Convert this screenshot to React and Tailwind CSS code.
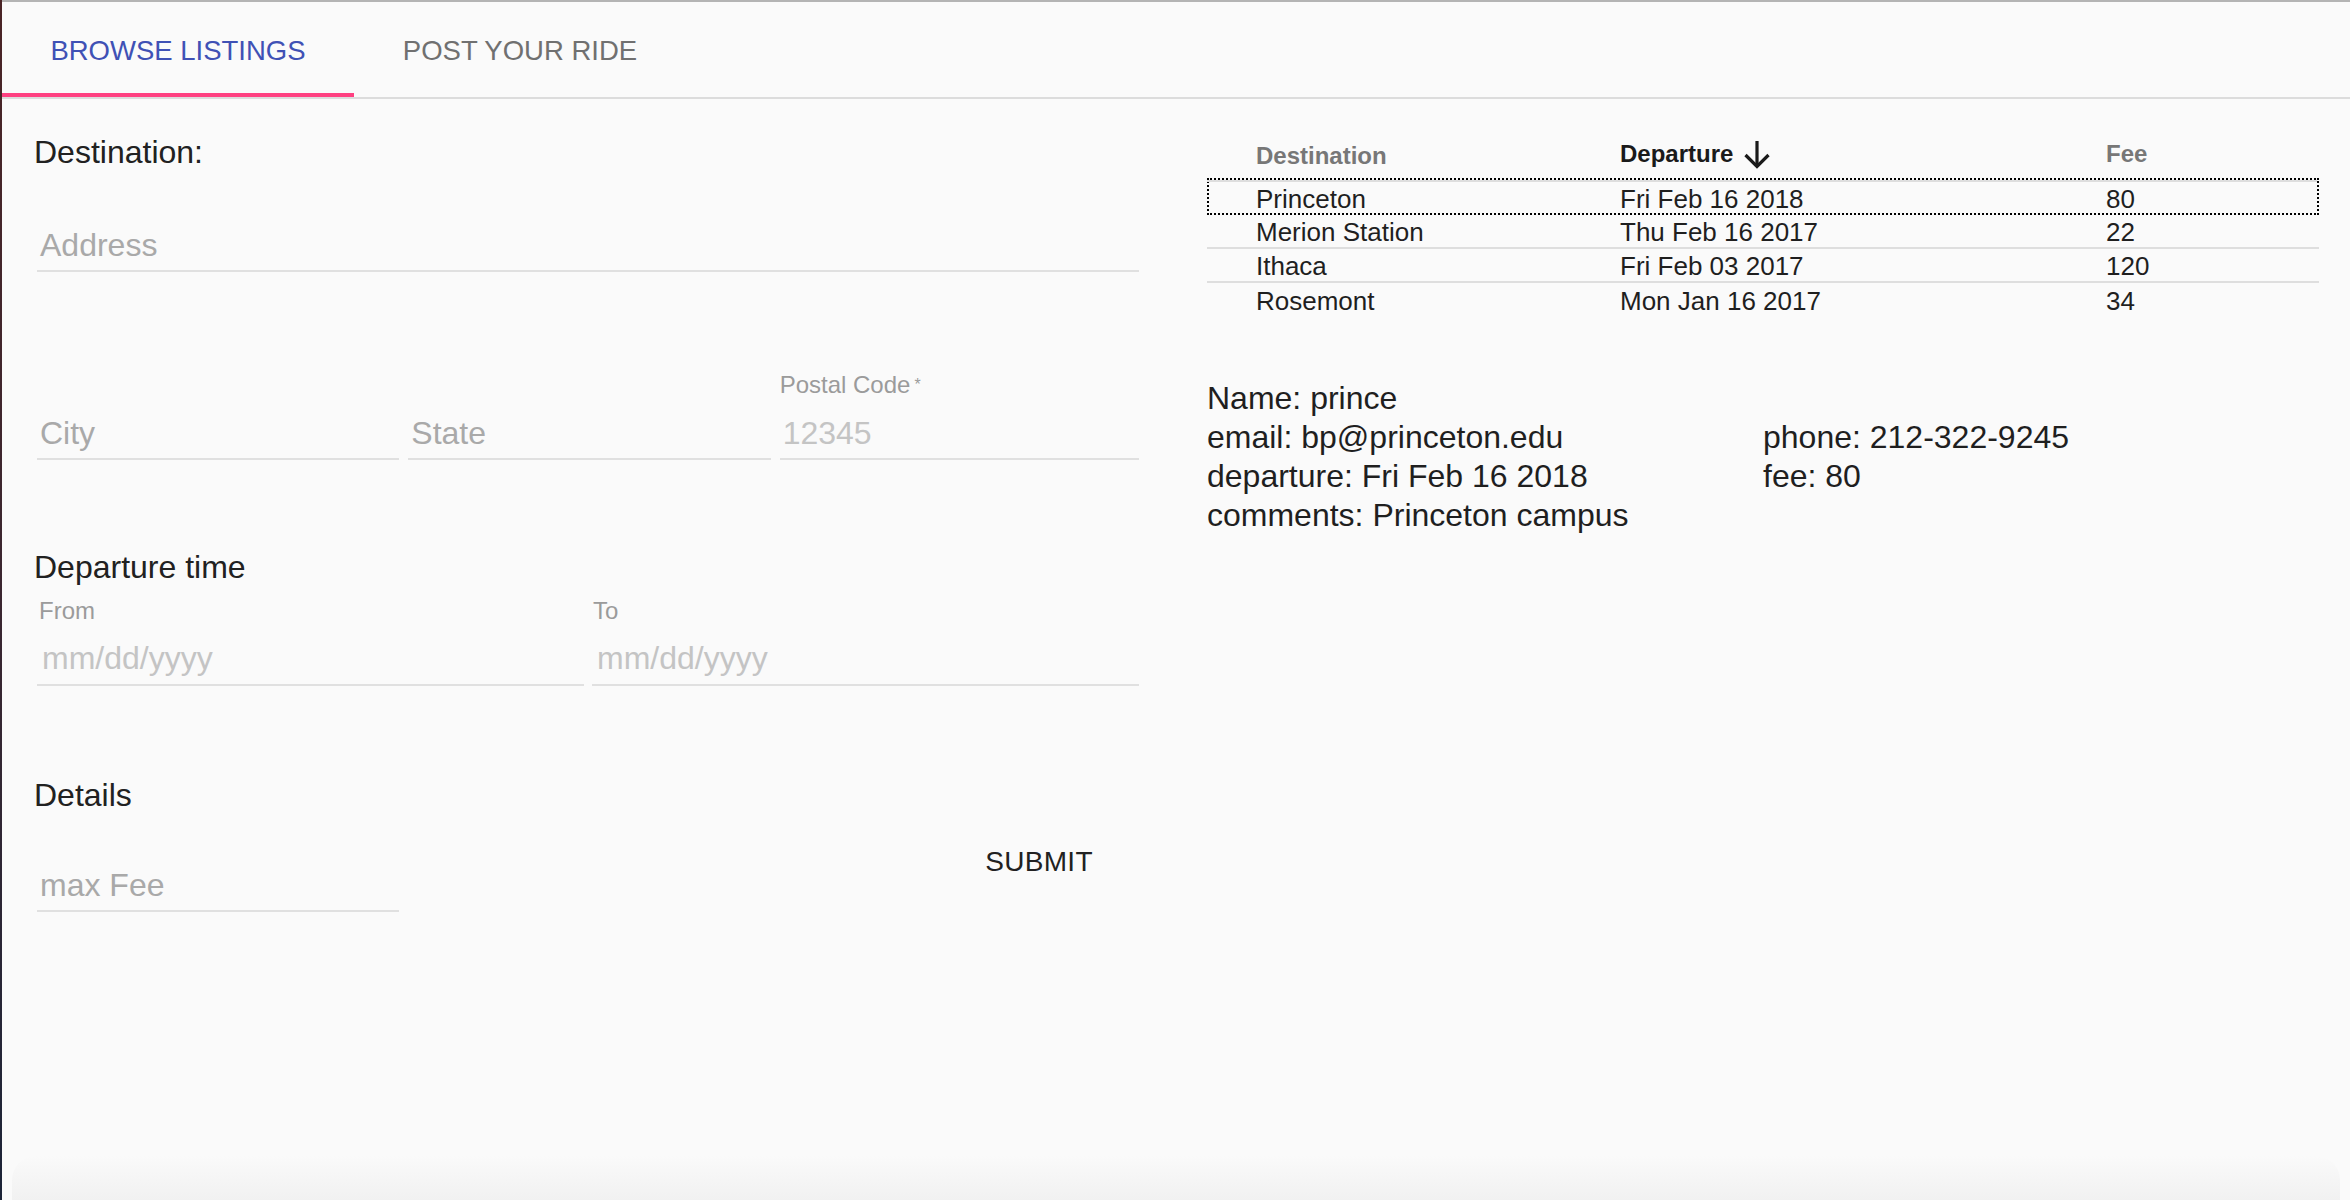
import React from "react";

const FONT = { fontFamily: '"Liberation Sans", Arial, Helvetica, sans-serif' };

function Field({ placeholder, light, className = "" }) {
  return (
    <div className={`border-b-2 border-[#e0e0e0] pl-[3px] text-[32px] leading-[37px] ${light ? "text-[#c4c4c4]" : "text-[#a9a9a9]"} ${className}`}>
      {placeholder}
    </div>
  );
}

function ArrowDownIcon() {
  return (
    <svg width="32" height="32" viewBox="0 0 32 32" fill="none" stroke="#1a1a1a" strokeWidth="3.2" strokeLinecap="butt" strokeLinejoin="miter">
      <line x1="16" y1="3" x2="16" y2="28" />
      <polyline points="4.5,17 16,28.5 27.5,17" />
    </svg>
  );
}

const rows = [
  ["Princeton", "Fri Feb 16 2018", "80"],
  ["Merion Station", "Thu Feb 16 2017", "22"],
  ["Ithaca", "Fri Feb 03 2017", "120"],
  ["Rosemont", "Mon Jan 16 2017", "34"],
];

export default function App() {
  return (
    <div className="w-[2350px] h-[1200px] flex bg-[#fafafa] overflow-hidden" style={FONT}>
      <div className="w-[2px] h-full bg-gradient-to-b from-[#4a2426] via-[#3a2630] to-[#1c2438]" />
      <div className="flex-1 flex flex-col border-t-2 border-[#b4b4b4]">
        {/* Tabs */}
        <div className="flex h-[97px] border-b-2 border-[#dcdcdc]">
          <div className="relative w-[352px] flex items-center justify-center text-[27.5px] text-[#3f51b5] pt-[3px]">
            BROWSE LISTINGS
            <div className="absolute left-0 right-0 bottom-0 h-[4px] bg-[#ff4081]" />
          </div>
          <div className="w-[332px] flex items-center justify-center text-[27.5px] text-[#707070] pt-[3px]">
            POST YOUR RIDE
          </div>
        </div>

        {/* Content */}
        <div className="flex">
          {/* Left form */}
          <div className="w-[1173px] pl-[32px] pr-[33px] flex flex-col">
            <div className="mt-[35px] text-[32px] leading-[37px] text-[#212121]">Destination:</div>
            <Field placeholder="Address" className="mt-[56px] mx-[3px] pb-[6px]" />

            <div className="mt-[99px] mx-[3px] flex items-end gap-[9px]">
              <Field placeholder="City" className="flex-1 pb-[6px]" />
              <Field placeholder="State" className="flex-1 pb-[6px]" />
              <div className="flex-1 flex flex-col">
                <div className="text-[24px] leading-[28px] text-[#9b9b9b] mb-[16px]">
                  Postal Code<span className="text-[16px] align-top ml-[4px]">*</span>
                </div>
                <Field placeholder="12345" light className="pb-[6px]" />
              </div>
            </div>

            <div className="mt-[89px] text-[32px] leading-[37px] text-[#212121]">Departure time</div>
            <div className="mt-[11px] mx-[3px] flex gap-[8px]">
              <div className="flex-1 flex flex-col">
                <div className="pl-[2px] text-[24px] leading-[28px] text-[#9b9b9b] mb-[15px]">From</div>
                <Field placeholder="mm/dd/yyyy" light className="pl-[5px] pb-[7px]" />
              </div>
              <div className="flex-1 flex flex-col">
                <div className="pl-[1px] text-[24px] leading-[28px] text-[#9b9b9b] mb-[15px]">To</div>
                <Field placeholder="mm/dd/yyyy" light className="pl-[5px] pb-[7px]" />
              </div>
            </div>

            <div className="mt-[91px] text-[32px] leading-[37px] text-[#212121]">Details</div>
            <div className="mt-[12px] mx-[3px] flex items-start justify-between">
              <Field placeholder="max Fee" className="w-[362px] mt-[41px] pb-[6px]" />
              <button className="w-[176px] h-[72px] mr-[12px] flex items-center justify-center text-[28px] font-medium text-[#212121] tracking-[0.3px]">
                SUBMIT
              </button>
            </div>
          </div>

          {/* Right panel */}
          <div className="flex-1 pl-[32px] pr-[31px] flex flex-col">
            <div className="grid grid-cols-[413px_486px_1fr] h-[79px] items-end pb-[8px] text-[24px] font-bold">
              <div className="pl-[49px] leading-[28px] text-[#777777]">Destination</div>
              <div className="flex items-center text-[#1a1a1a]">
                <span className="leading-[28px]">Departure</span>
                <span className="ml-[8px]"><ArrowDownIcon /></span>
              </div>
              <div className="leading-[28px] text-[#777777] mb-[2px]">Fee</div>
            </div>

            <div className="text-[26px] leading-[28px] text-[#1f1f1f]">
              {rows.map((r, i) => {
                const base = "grid grid-cols-[413px_486px_1fr] items-center";
                if (i === 0) {
                  return (
                    <div key={i} className="border-2 border-dotted border-black">
                      <div className={`${base} border-t-2 border-[#dedede] h-[33px] -ml-[2px] pt-[2px]`}>
                        <div className="pl-[49px]">{r[0]}</div>
                        <div>{r[1]}</div>
                        <div>{r[2]}</div>
                      </div>
                    </div>
                  );
                }
                return (
                  <div key={i} className={`${base} h-[34px] pt-[2px] ${i < rows.length - 1 ? "border-b-2 border-[#dedede]" : ""}`}>
                    <div className="pl-[49px]">{r[0]}</div>
                    <div>{r[1]}</div>
                    <div>{r[2]}</div>
                  </div>
                );
              })}
            </div>

            <div className="mt-[62px] grid grid-cols-[556px_1fr] text-[32px] leading-[39px] text-[#1f1f1f]">
              <div>Name: prince</div>
              <div />
              <div>email: bp@princeton.edu</div>
              <div>phone: 212-322-9245</div>
              <div>departure: Fri Feb 16 2018</div>
              <div>fee: 80</div>
              <div>comments: Princeton campus</div>
              <div />
            </div>
          </div>
        </div>

        <div className="flex-1" />
        <div className="h-[44px] mx-[10px] rounded-t-[24px] bg-gradient-to-b from-[#fafafa] to-[#f1f1f1]" />
      </div>
    </div>
  );
}
